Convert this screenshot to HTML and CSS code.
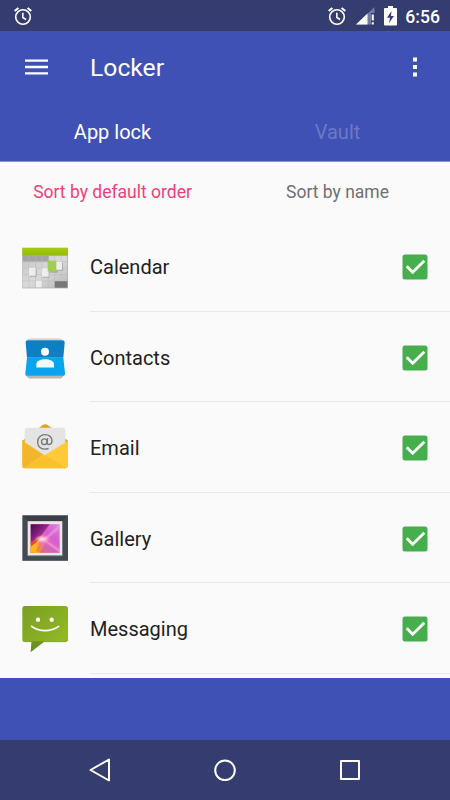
FILE: index.html
```html
<!DOCTYPE html>
<html lang="en">

<head>
  <meta charset="UTF-8" />
  <meta name="viewport" content="width=device-width, initial-scale=1.0" />
  <title>Locker</title>
  <link rel="stylesheet" href="styles.css">
</head>

<body>
  <!-- shared icons -->
  <svg class="defs" width="0" height="0">
    <symbol id="alarm" viewBox="0 0 20 20">
      <g fill="none" stroke="#fff" stroke-width="1.6">
        <circle cx="10" cy="11" r="7.3" />
        <path d="M1.7 5 5.4 1.9M18.3 5 14.6 1.9" stroke-width="2" />
        <path d="M9.8 6.8v4.7l3.3 2" />
      </g>
    </symbol>
    <symbol id="check" viewBox="0 0 26 26">
      <rect x=".5" y=".5" width="25" height="25" rx="2.5" fill="#46ae4c" />
      <path d="M4.7 12.2 10.7 18.3 22.3 6.7" fill="none" stroke="#fff" stroke-width="2.8" />
    </symbol>
  </svg>

  <div class="status-bar">
    <svg class="alarm" width="20" height="20"><use href="#alarm" /></svg>
    <div class="status-icons">
      <svg class="alarm" width="20" height="20"><use href="#alarm" /></svg>
      <svg class="signal" width="20" height="18" viewBox="0 0 20 18">
        <path d="M0 17.5 18.5 0v6H15v11.5z" fill="#737aa4" />
        <path d="M0 17.5 11.5 6.5v11z" fill="#fff" />
        <path d="M15.7 7.5h2.1v6h-2.1zM15.7 15.3h2.1v2.2h-2.1z" fill="#fff" />
      </svg>
      <svg class="battery" width="13" height="20" viewBox="0 0 13 20">
        <path d="M4 0h5v2h3q1 0 1 1v15.5q0 1-1 1H1q-1 0-1-1V3q0-1 1-1h3z" fill="#fff" />
        <path d="M7.5 5 3 11.800h3L5 17l5-7H7z" fill="#343c70" />
      </svg>
      <span class="clock">6:56</span>
    </div>
  </div>

  <header>
    <div class="toolbar">
      <svg class="menu" width="24" height="16" viewBox="0 0 24 16">
        <path d="M0 1.600h23M0 8h23M0 14.400h23" stroke="#fff" stroke-width="2.4" />
      </svg>
      <h1>Locker</h1>
      <svg class="more" width="4" height="20" viewBox="0 0 4 20">
        <path d="M0 .5h4v4H0zM0 8h4v4H0zM0 15.5h4v4H0z" fill="#fff" />
      </svg>
    </div>
    <div class="tabs">
      <div class="tab active">App lock</div>
      <div class="tab">Vault</div>
    </div>
  </header>

  <div class="sort">
    <div class="sort-option active">Sort by default order</div>
    <div class="sort-option">Sort by name</div>
  </div>

  <ul class="app-list">
    <li>
      <svg class="app-icon" viewBox="33 15 144 162">
        <defs>
          <linearGradient id="cal-top" x1="0" y1="0" x2="0" y2="1">
            <stop offset="0" stop-color="#a5cc13" />
            <stop offset="1" stop-color="#91bc00" />
          </linearGradient>
          <linearGradient id="cal-page" x1="0" y1="0" x2="1" y2="1">
            <stop offset="0" stop-color="#c4c4c4" />
            <stop offset=".5" stop-color="#dadada" />
            <stop offset="1" stop-color="#b9b9b9" />
          </linearGradient>
        </defs>
        <rect x="37" y="39" width="137" height="121" fill="#aaa" />
        <rect x="38" y="60" width="134" height="98" fill="url(#cal-page)" />
        <rect x="38" y="62" width="78" height="18" fill="#a4a4a4" />
        <rect x="134" y="138" width="38" height="20" fill="#777" />
        <path d="M57 62v96M77 62v96M96 62v96M115 62v96M134 62v76M153 62v76M38 80h134M38 99h134M38 119h134M38 138h134" stroke="#b9b9b9" stroke-width="1.5" />
        <path d="M60 101h20v24H60zM98 103h20v25H98zM142 83h17v24h-17zM116 80h27v33h-27z" fill="#777" opacity=".45" />
        <path d="M57 98h20v24H57zM96 100h20v25H96zM138 80h18v24h-18zM78 137h17v20H78z" fill="#eee" />
        <rect x="113" y="77" width="26" height="32" fill="#9fce57" />
        <rect x="37" y="38" width="136" height="24" fill="url(#cal-top)" />
      </svg>
      <span class="app-name">Calendar</span>
      <svg class="check" width="26" height="26"><use href="#check" /></svg>
    </li>
    <li>
      <svg class="app-icon" viewBox="33 16.5 144 162">
        <path d="M62 38h84q9 0 13 7H48q5-7 14-7z" fill="#d6d6d6" />
        <path d="M48 149h113q-4 10-13 10H62q-9 0-14-10z" fill="#bcb5b2" />
        <path d="M47 52q-1-8 7-8h102q9 0 8 8l-4 45H51z" fill="#0b80c5" />
        <path d="M51 97h109l5 46q1 8-8 8H53q-8 0-7-8z" fill="#08a5ee" />
        <circle cx="105" cy="79" r="12" fill="#fff" />
        <path d="M79 126v-10c0-20 53-20 53 0v10z" fill="#f3faff" />
      </svg>
      <span class="app-name">Contacts</span>
      <svg class="check" width="26" height="26"><use href="#check" /></svg>
    </li>
    <li>
      <svg class="app-icon" viewBox="33 18 144 162">
        <path d="M37 77 95 32q10-8 21 0l58 45v10H37z" fill="#e7a21c" />
        <path d="M44 45q0-7 7-7h108q7 0 7 7v80H44z" fill="#e4e4e4" />
        <path d="M37 77 104 121 174 77v76q0 7-7 7H44q-7 0-7-7z" fill="#ffca38" />
        <path d="M37 77 100 119 42 160q-5-1-5-7z" fill="#f5b52b" />
        <path d="m104 121 66 37q-2 2-6 2H42z" fill="#fbc02d" />
        <g fill="none" stroke="#777" stroke-width="4">
          <circle cx="103" cy="80" r="8.5" />
          <path d="M113 69l-2 14c-1 8 15 8 15-5 0-26-43-26-43 3 0 20 19 25 33 19" />
        </g>
      </svg>
      <span class="app-name">Email</span>
      <svg class="check" width="26" height="26"><use href="#check" /></svg>
    </li>
    <li>
      <svg class="app-icon" viewBox="33 19.5 144 162">
        <defs>
          <linearGradient id="photo" x1="0" y1="1" x2="1" y2="0">
            <stop offset="0" stop-color="#f5c416" />
            <stop offset=".18" stop-color="#f78530" />
            <stop offset=".4" stop-color="#ec75b2" />
            <stop offset=".65" stop-color="#d45ed1" />
            <stop offset="1" stop-color="#dc83dc" />
          </linearGradient>
          <linearGradient id="photo-dark" x1="0" y1="0" x2=".7" y2=".7">
            <stop offset="0" stop-color="#3c1048" />
            <stop offset=".5" stop-color="#7a1c78" />
            <stop offset="1" stop-color="#c9389e" />
          </linearGradient>
          <radialGradient id="glow">
            <stop offset="0" stop-color="#fff3ee" />
            <stop offset="1" stop-color="#ffc4dc" stop-opacity="0" />
          </radialGradient>
        </defs>
        <rect x="37" y="30" width="137" height="136" fill="#454952" />
        <path d="M37 30h137l-18 17H55z" fill="#3b3f47" />
        <rect x="53" y="47" width="104" height="104" fill="#e8e8e8" />
        <rect x="53" y="149" width="104" height="3" fill="#889083" />
        <rect x="62" y="56" width="87" height="86" fill="url(#photo)" />
        <path d="M62 56h57L96 88l-34 28z" fill="url(#photo-dark)" />
        <path d="M62 112 92 90 69 142h-7z" fill="#e2493c" />
        <path d="M62 124 90 102 76 142H62z" fill="#f7b71c" />
        <path d="m90 142 16-27 43 27z" fill="#b558cc" opacity=".5" />
        <path d="M98 102 149 56v14l-42 34 42 27v11z" fill="#f3a6ea" opacity=".5" />
        <ellipse cx="96" cy="101" rx="24" ry="13" fill="url(#glow)" />
      </svg>
      <span class="app-name">Gallery</span>
      <svg class="check" width="26" height="26"><use href="#check" /></svg>
    </li>
    <li>
      <svg class="app-icon" viewBox="33 21 144 162">
        <defs>
          <linearGradient id="sms" x1="0" y1="0" x2="1" y2="1">
            <stop offset="0" stop-color="#789f22" />
            <stop offset="1" stop-color="#97be25" />
          </linearGradient>
        </defs>
        <path d="M45 33h121q8 0 8 8v91q0 8-8 8h-64l-40 31 3-31H45q-8 0-8-8V41q0-8 8-8z" fill="url(#sms)" />
        <path d="M65 140h37l-40 31z" fill="#6c8f20" />
        <path d="M38 137q3 3 7 3h121q5 0 8-5" fill="none" stroke="#719022" stroke-width="2" />
        <circle cx="84" cy="74" r="6.5" fill="#fff" />
        <circle cx="125" cy="74" r="6.5" fill="#fff" />
        <path d="M65 94c23 17 57 17 81 0" fill="none" stroke="#fff" stroke-width="5" stroke-linecap="round" />
      </svg>
      <span class="app-name">Messaging</span>
      <svg class="check" width="26" height="26"><use href="#check" /></svg>
    </li>
  </ul>

  <div class="banner"></div>

  <nav>
    <svg width="24" height="26" viewBox="0 0 24 26">
      <path d="M2.500 13 21 2.500v21z" />
    </svg>
    <svg width="24" height="26" viewBox="0 0 24 26">
      <circle cx="12" cy="13.3" r="9.8" />
    </svg>
    <svg width="24" height="26" viewBox="0 0 24 26">
      <rect x="3" y="4" width="18" height="18" />
    </svg>
  </nav>
</body>

</html>
```

FILE: styles.css
```css
* {
  box-sizing: border-box;
}

body {
  margin: 0;
  height: 800px;
  display: flex;
  flex-direction: column;
  overflow: hidden;
  font-family: Roboto, sans-serif;
  background: #fafafa;
  color: #212121;
}

svg {
  display: block;
  flex-shrink: 0;
}

.defs {
  position: absolute;
}

/* status bar */
.status-bar {
  height: 31px;
  flex-shrink: 0;
  display: flex;
  justify-content: space-between;
  align-items: center;
  padding: 0 10px 0 13px;
  background: #343c70;
}

.status-icons {
  display: flex;
  align-items: center;
}

.signal {
  margin-left: 9px;
}

.battery {
  margin-left: 8px;
}

.clock {
  margin-left: 8px;
  padding-top: 2px;
  color: white;
  font-size: 17.6px;
  font-weight: 500;
  line-height: 20px;
}

/* toolbar + tabs */
header {
  height: 131px;
  flex-shrink: 0;
  background: #3f51b5;
  border-bottom: 1px solid #8c96d2;
  color: white;
}

.toolbar {
  height: 72px;
  display: flex;
  align-items: center;
  padding: 0 33px 0 25px;
}

h1 {
  margin: 0 auto 0 41px;
  padding-top: 1px;
  font-size: 24.7px;
  font-weight: 400;
}

.tabs,
.sort {
  display: grid;
  grid-template-columns: 1fr 1fr;
  text-align: center;
}

.tab {
  font-size: 20px;
  line-height: 58px;
  color: #6b79c8;
}

.tab.active {
  color: white;
}

.sort {
  height: 59px;
  flex-shrink: 0;
  font-size: 17.5px;
  line-height: 60px;
  color: #707070;
}

.sort-option.active {
  color: #ec407a;
}

/* app list */
.app-list {
  height: 457px;
  flex-shrink: 0;
  overflow: hidden;
  margin: 0;
  padding: 0;
  list-style: none;
}

.app-list li {
  height: 90.5px;
  display: flex;
  align-items: center;
  padding: 1.5px 22px 0 21px;
  background: linear-gradient(#e8e8e8, #e8e8e8) 90px 100% / 100% 1px no-repeat;
}

.app-icon {
  width: 48px;
  height: 54px;
}

.app-name {
  flex: 1;
  margin-left: 21px;
  font-size: 20px;
}

/* bottom */
.banner {
  flex: 1;
  background: #3f51b5;
}

nav {
  height: 60px;
  flex-shrink: 0;
  display: flex;
  justify-content: center;
  align-items: center;
  gap: 101px;
  background: #343c70;
}

nav svg {
  fill: none;
  stroke: #fff;
  stroke-width: 2;
  stroke-linejoin: round;
}
```
